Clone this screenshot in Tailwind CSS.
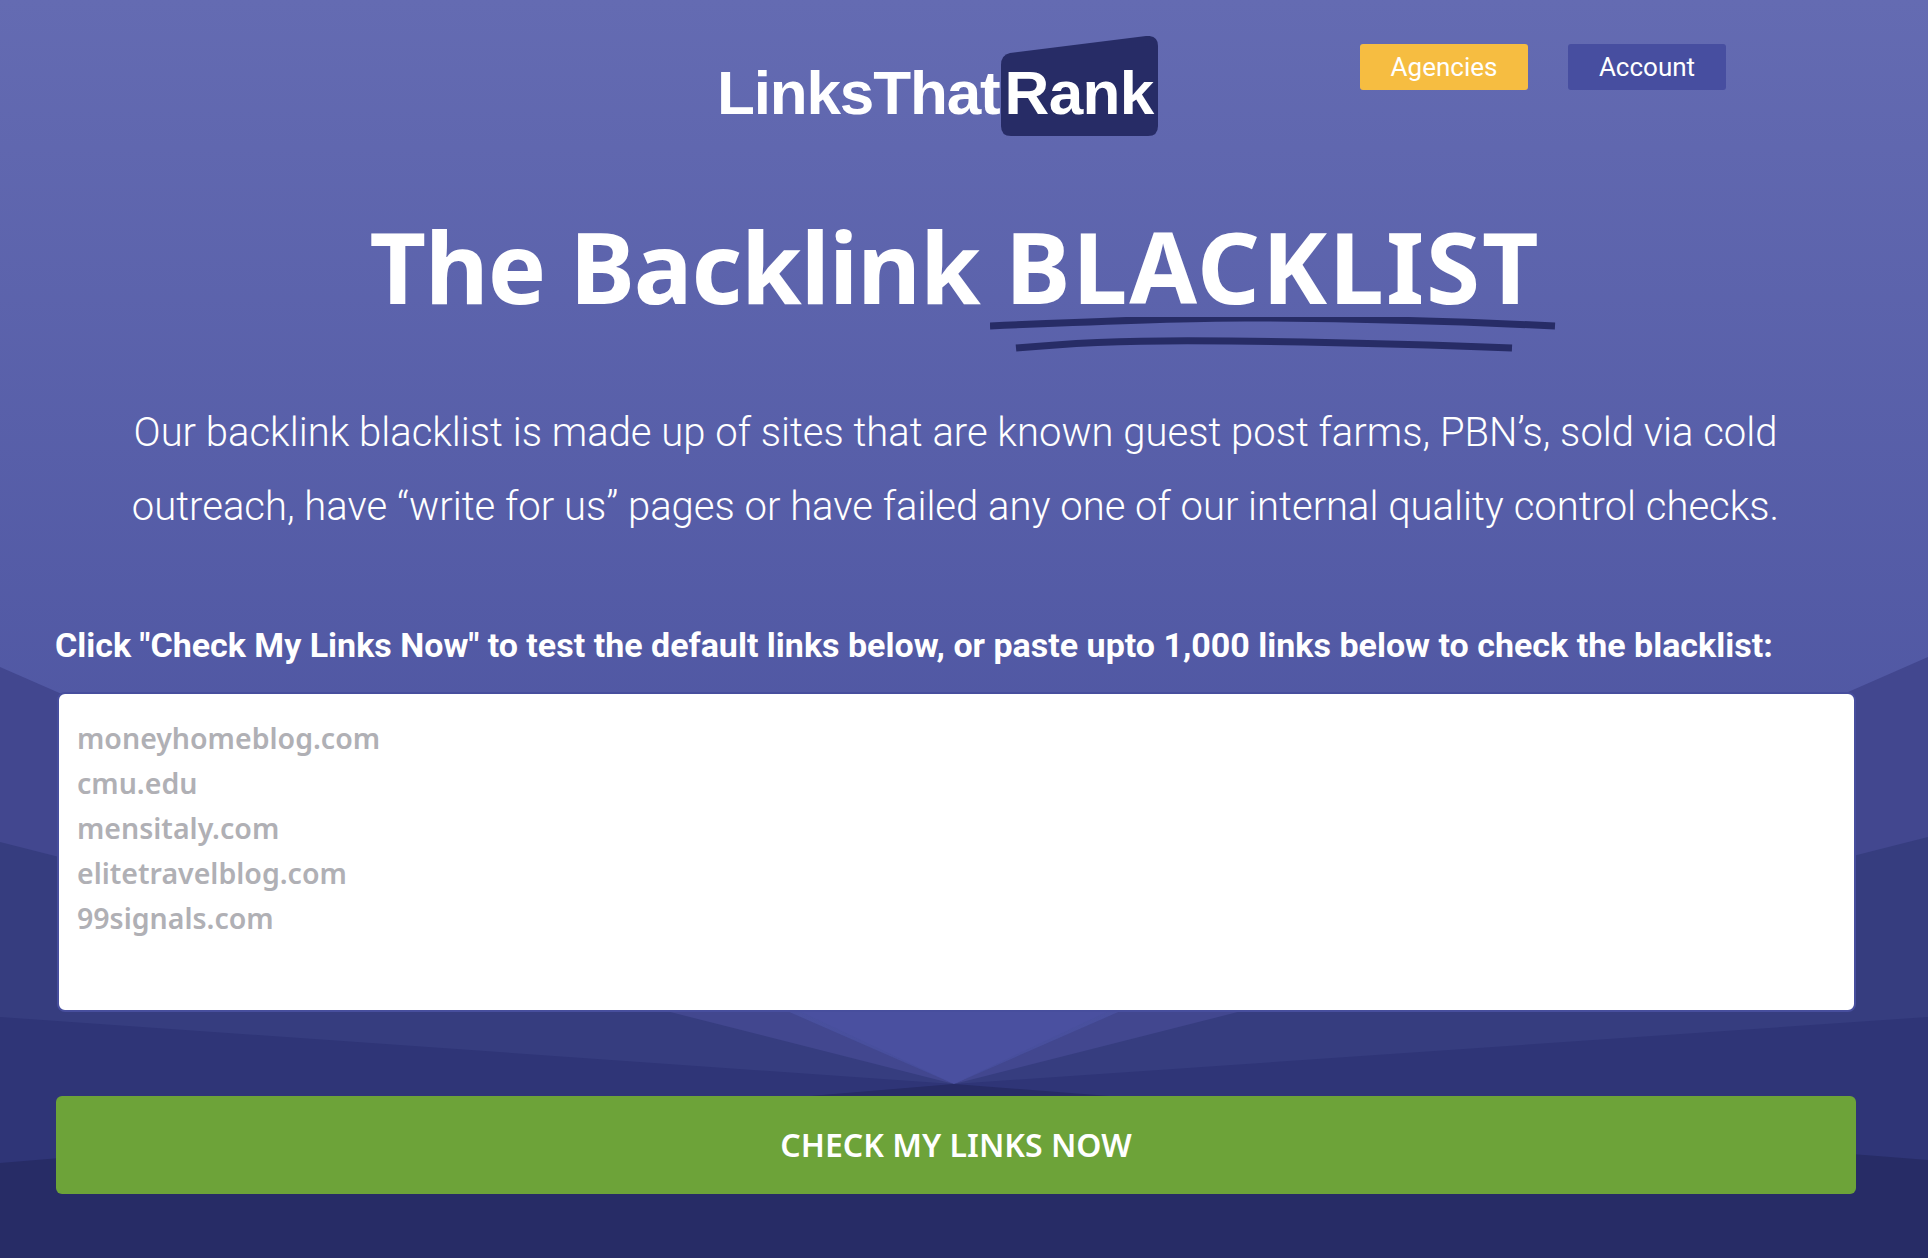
<!DOCTYPE html>
<html lang="en">

<head>
    <meta charset="UTF-8">
    <meta name="viewport" content="width=device-width, initial-scale=1.0">
    <title>The Backlink Blacklist</title>
    <script src="https://cdn.jsdelivr.net/npm/@tailwindcss/browser@4"></script>
</head>

<body class="bg-[#272c66]">
    <div class="relative w-[1928px] h-[1258px] overflow-hidden bg-gradient-to-b from-[#646bb2] to-[#474e9c] to-[1084px] font-['Roboto',sans-serif]">

        <!-- background fan, all rays meet at the same point -->
        <svg class="absolute inset-0" width="1928" height="1258" viewBox="0 0 1928 1258">
            <polygon fill="#42478f" points="0,667 954,1084 1928,657 1928,1258 0,1258" />
            <polygon fill="#4a50a0" points="954,1084 640,936 1268,936" />
            <polygon fill="#363d7f" points="0,842 954,1084 1928,837 1928,1258 0,1258" />
            <polygon fill="#2f3577" points="0,1017 954,1084 1928,1017 1928,1258 0,1258" />
            <polygon fill="#272c66" points="0,1163 954,1084 1928,1160 1928,1258 0,1258" />
        </svg>

        <div class="relative">
            <header class="flex items-start h-[150px]">
                <div class="relative ml-[717px] mt-[36px] w-[441px] h-[100px]">
                    <svg class="absolute inset-0" width="441" height="100" viewBox="0 0 441 100">
                        <path fill="#272c66" d="M284 29 Q284 19 293 17 L429 0 Q441 -1 441 10 L441 90 Q441 100 431 100 L294 100 Q284 100 284 90 Z" />
                    </svg>
                    <div class="absolute left-0 top-[22px] text-[62px] leading-[70px] tracking-[-0.6px] font-bold text-white font-['Liberation_Sans',sans-serif] whitespace-nowrap"><span class="tracking-[-1.15px]">LinksThat</span><span class="ml-[5px]">Rank</span></div>
                </div>
                <a class="ml-[202px] mt-[44px] w-[168px] h-[46px] flex items-center justify-center rounded-[3px] bg-[#f6bd41] text-white text-[26px]">Agencies</a>
                <a class="ml-[40px] mt-[44px] w-[158px] h-[46px] flex items-center justify-center rounded-[3px] bg-[#474ea0] text-white text-[26px]">Account</a>
            </header>

            <h1 class="mt-[56px] pr-[18px] text-center text-[98px] leading-[120px] font-bold text-white font-['Noto_Sans',sans-serif]"><span class="tracking-[-1px]">The Backlink</span> <span class="tracking-[2px]">BLACKLIST</span></h1>

            <svg class="block ml-[990px] -mt-[9px]" width="566" height="41" viewBox="0 0 566 41">
                <path fill="none" stroke="#272c66" stroke-width="7" d="M0 9 Q200 0 270 1 Q420 2 565 9" />
                <path fill="none" stroke="#272c66" stroke-width="7" d="M26 31 Q120 22 240 24 Q400 26 522 31" />
            </svg>

            <p class="mt-[38px] pr-[17px] text-center text-[40px] leading-[74px] font-light text-white">Our backlink blacklist is made up of sites that are known guest post farms, PBN’s, sold via cold<br>outreach, have “write for us” pages or have failed any one of our internal quality control checks.</p>

            <p class="mt-[81px] pl-[55px] text-[34px] leading-[40px] font-bold text-white whitespace-nowrap">Click "Check My Links Now" to test the default links below, or paste upto 1,000 links below to check the blacklist:</p>

            <div class="mt-[27px] ml-[57px] w-[1799px] h-[320px] pt-[22px] pl-[18px] bg-white border-2 border-[#474e9d] rounded-[8px] text-[28.5px] leading-[45px] font-semibold text-[#b0b0b5] font-['Noto_Sans',sans-serif]">
                <div>moneyhomeblog.com</div>
                <div>cmu.edu</div>
                <div>mensitaly.com</div>
                <div>elitetravelblog.com</div>
                <div>99signals.com</div>
            </div>

            <button class="block mt-[84px] ml-[56px] w-[1800px] h-[98px] rounded-[6px] bg-[#6da339] text-white text-[32px] font-semibold font-['Noto_Sans',sans-serif]">CHECK MY LINKS NOW</button>
        </div>
    </div>
</body>

</html>
